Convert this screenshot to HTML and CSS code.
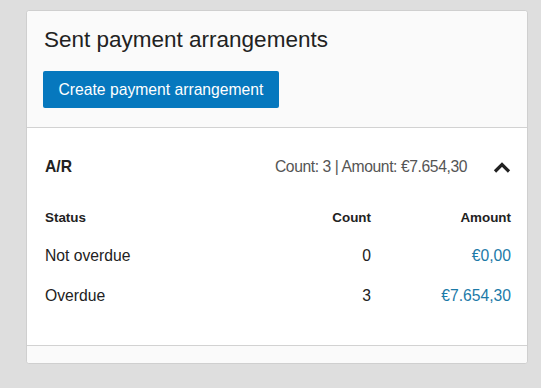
FILE: index.html
```html
<!DOCTYPE html>
<html lang="en">
<head>
  <meta charset="UTF-8">
  <meta name="viewport" content="width=device-width, initial-scale=1.0">
  <title>Sent payment arrangements</title>
  <link rel="stylesheet" href="styles.css">
</head>
<body>

  <div class="card">
    <div class="card-header">
      <h1 class="card-title">Sent payment arrangements</h1>
      <button class="create-button">Create payment arrangement</button>
    </div>

    <div class="card-body">
      <div class="group-row">
        <span class="group-name">A/R</span>
        <span class="group-summary">
          Count: 3 | Amount: €7.654,30
          <svg class="chevron" width="18" height="11" viewBox="0 0 18 11">
            <path d="M2 9.5 L9 2.5 L16 9.5" fill="none" stroke="#222" stroke-width="3.2"/>
          </svg>
        </span>
      </div>

      <table class="status-table">
        <thead>
          <tr>
            <th class="col-status">Status</th>
            <th class="col-count">Count</th>
            <th class="col-amount">Amount</th>
          </tr>
        </thead>
        <tbody>
          <tr>
            <td>Not overdue</td>
            <td class="col-count">0</td>
            <td class="col-amount"><a href="#">€0,00</a></td>
          </tr>
          <tr>
            <td>Overdue</td>
            <td class="col-count">3</td>
            <td class="col-amount"><a href="#">€7.654,30</a></td>
          </tr>
        </tbody>
      </table>
    </div>

    <div class="card-footer"></div>
  </div>

</body>
</html>
```

FILE: styles.css
```css
body {
  margin: 10px 0 0 26px;
  font-family: "Liberation Sans", Arial, sans-serif;
  background-color: #dedede;
  color: #222;
}

.card {
  width: 500px;
  background-color: #fff;
  border: 1px solid #cfcfcf;
  border-radius: 3px;
}

.card-header {
  padding: 15px 16px 19px;
  background-color: #fafafa;
  border-bottom: 1px solid #d2d2d2;
  border-radius: 3px 3px 0 0;
}

.card-title {
  margin: 0 0 0 1px;
  font-size: 22.5px;
  font-weight: normal;
  line-height: 28px;
  color: #222;
}

.create-button {
  display: block;
  margin-top: 17px;
  height: 37px;
  padding: 0 15.5px;
  background-color: #0678be;
  border: none;
  border-radius: 2px;
  color: white;
  font-family: inherit;
  font-size: 15.7px;
}

.card-body {
  padding: 20px 16px 29px 18px;
}

.group-row {
  display: flex;
  justify-content: space-between;
  align-items: center;
  height: 38px;
  margin-bottom: 14px;
}

.group-name {
  font-size: 15.7px;
  font-weight: bold;
}

.group-summary {
  display: flex;
  align-items: center;
  font-size: 15.7px;
  letter-spacing: -0.42px;
  color: #555;
}

.chevron {
  margin-left: 26px;
}

.status-table {
  width: 100%;
  border-collapse: collapse;
  font-size: 15.7px;
}

.status-table th {
  padding: 10px 0 11px;
  font-size: 13.4px;
  line-height: 15px;
  text-align: left;
}

.status-table td {
  height: 40px;
  padding: 0;
}

.status-table .col-count {
  text-align: right;
}

.status-table .col-amount {
  width: 140px;
  text-align: right;
}

.status-table a {
  color: #1c7aa8;
  text-decoration: none;
}

.card-footer {
  height: 17px;
  background-color: #fafafa;
  border-top: 1px solid #d2d2d2;
  border-radius: 0 0 3px 3px;
}
```
